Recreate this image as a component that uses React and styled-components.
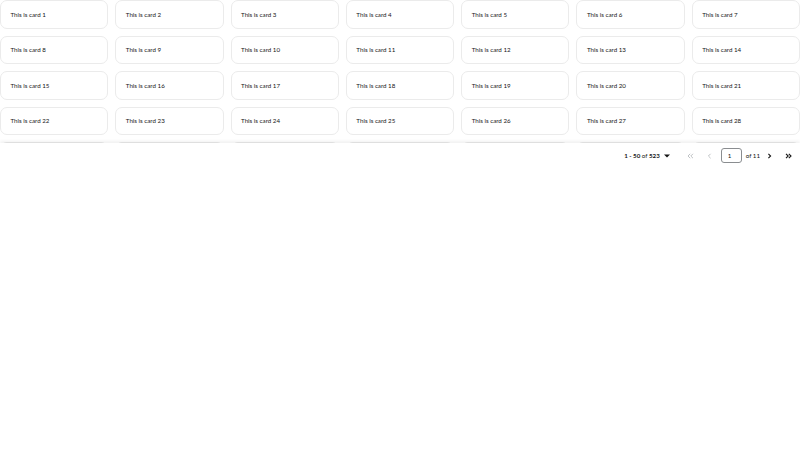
import React from 'react';
import styled, { createGlobalStyle } from 'styled-components';

const GlobalStyle = createGlobalStyle`
  html, body {
    margin: 0;
    padding: 0;
    background: #fff;
  }
  body {
    font-family: Lato, "Liberation Sans", sans-serif;
    color: #151515;
  }
`;

const cards = Array.from({ length: 50 }, (_, i) => i + 1);

const Page = styled.div`
  display: flex;
  flex-direction: column;
  width: 800px;
`;

const ScrollArea = styled.div`
  height: 143px;
  overflow: hidden;
`;

const Gallery = styled.div`
  display: grid;
  grid-template-columns: repeat(7, 1fr);
  gap: 7px;
`;

const Card = styled.div`
  height: 28.5px;
  box-sizing: border-box;
  border: 1px solid #ebebeb;
  border-radius: 7px;
  background: #fff;
  display: flex;
  align-items: center;
  padding-left: 9.5px;
  font-size: 6.2px;
`;

const PaginationBar = styled.div`
  position: relative;
  z-index: 1;
  height: 25px;
  background: #fff;
  box-shadow: 0 -2px 3px rgba(0, 0, 0, 0.06);
  display: flex;
  justify-content: flex-end;
  align-items: center;
  padding-right: 2px;
  font-size: 6.2px;
`;

const Toggle = styled.div`
  display: flex;
  align-items: center;
  gap: 4px;
  margin-right: 11px;
  b {
    font-weight: 700;
  }
`;

const NavButton = styled.div`
  width: 19px;
  height: 19px;
  display: flex;
  align-items: center;
  justify-content: center;
  color: ${(p) => (p.$disabled ? '#b8bbbe' : '#151515')};
`;

const PageInput = styled.div`
  width: 21px;
  height: 15px;
  box-sizing: border-box;
  margin-left: 2px;
  border: 1px solid #8a8d90;
  border-radius: 3px;
  display: flex;
  align-items: center;
  padding-left: 6px;
`;

const OfText = styled.span`
  margin: 0 0 0 4px;
`;

const Caret = () => (
  <svg width="6" height="4" viewBox="0 0 6 4">
    <path d="M0 0.5 L6 0.5 L3 3.5 Z" fill="#151515" />
  </svg>
);

const Angle = ({ dir, double }) => (
  <svg width="7" height="6" viewBox="0 0 7 6" fill="none" stroke="currentColor" strokeWidth="0.9">
    {dir === 'left' ? (
      double ? (
        <>
          <path d="M3.2 0.8 L1 3 L3.2 5.2" />
          <path d="M6 0.8 L3.8 3 L6 5.2" />
        </>
      ) : (
        <path d="M4.6 0.8 L2.4 3 L4.6 5.2" />
      )
    ) : double ? (
      <>
        <path d="M1 0.8 L3.2 3 L1 5.2" strokeWidth="1.1" />
        <path d="M3.8 0.8 L6 3 L3.8 5.2" strokeWidth="1.1" />
      </>
    ) : (
      <path d="M2.4 0.8 L4.6 3 L2.4 5.2" strokeWidth="1.1" />
    )}
  </svg>
);

export default function App() {
  return (
    <Page>
      <GlobalStyle />
      <ScrollArea>
        <Gallery>
          {cards.map((n) => (
            <Card key={n}>This is card {n}</Card>
          ))}
        </Gallery>
      </ScrollArea>
      <PaginationBar>
        <Toggle>
          <span>
            <b>1 - 50</b> of <b>523</b>
          </span>
          <Caret />
        </Toggle>
        <NavButton $disabled>
          <Angle dir="left" double />
        </NavButton>
        <NavButton $disabled>
          <Angle dir="left" />
        </NavButton>
        <PageInput>1</PageInput>
        <OfText>of 11</OfText>
        <NavButton>
          <Angle dir="right" />
        </NavButton>
        <NavButton>
          <Angle dir="right" double />
        </NavButton>
      </PaginationBar>
    </Page>
  );
}
